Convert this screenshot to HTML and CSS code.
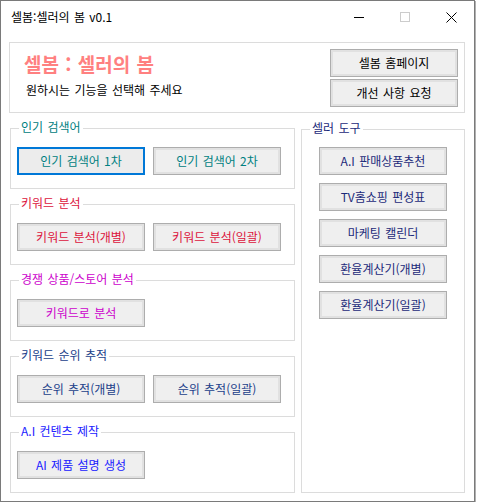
FILE: index.html
```html
<!DOCTYPE html>
<html lang="ko">
<head>
<meta charset="utf-8">
<title>셀봄:셀러의 봄 v0.1</title>
<link rel="stylesheet" href="styles.css">
</head>
<body>
<div class="window">
  <div class="titlebar">
    <span class="app-title">셀봄:셀러의 봄 v0.1</span>
    <div class="controls">
      <span class="ctl"><svg width="10" height="10" viewBox="0 0 10 10"><path d="M0 5.5H10" stroke="#000" stroke-width="1"/></svg></span>
      <span class="ctl"><svg width="10" height="10" viewBox="0 0 10 10"><rect x="0.5" y="0.5" width="9" height="9" fill="none" stroke="#cccccc" stroke-width="1"/></svg></span>
      <span class="ctl"><svg width="11" height="11" viewBox="0 0 11 11"><path d="M0.5 0.5L10.5 10.5M10.5 0.5L0.5 10.5" stroke="#000" stroke-width="1"/></svg></span>
    </div>
  </div>
  <div class="client">
    <div class="header">
      <div class="intro">
        <div class="brand">셀봄 : 셀러의 봄</div>
        <div class="lead">원하시는 기능을 선택해 주세요</div>
      </div>
      <div class="links">
        <button class="btn">셀봄 홈페이지</button>
        <button class="btn">개선 사항 요청</button>
      </div>
    </div>
    <div class="columns">
      <div class="left">
        <section class="group c-teal">
          <span class="legend">인기 검색어</span>
          <div class="row">
            <button class="btn focused">인기 검색어 1차</button>
            <button class="btn">인기 검색어 2차</button>
          </div>
        </section>
        <section class="group c-crimson">
          <span class="legend">키워드 분석</span>
          <div class="row">
            <button class="btn">키워드 분석(개별)</button>
            <button class="btn">키워드 분석(일괄)</button>
          </div>
        </section>
        <section class="group c-magenta">
          <span class="legend">경쟁 상품/스토어 분석</span>
          <div class="row">
            <button class="btn">키워드로 분석</button>
          </div>
        </section>
        <section class="group c-navy">
          <span class="legend">키워드 순위 추적</span>
          <div class="row">
            <button class="btn">순위 추적(개별)</button>
            <button class="btn">순위 추적(일괄)</button>
          </div>
        </section>
        <section class="group c-blue">
          <span class="legend">A.I 컨텐츠 제작</span>
          <div class="row">
            <button class="btn">AI 제품 설명 생성</button>
          </div>
        </section>
      </div>
      <section class="group tools c-midnight">
        <span class="legend">셀러 도구</span>
        <div class="stack">
          <button class="btn">A.I 판매상품추천</button>
          <button class="btn">TV홈쇼핑 편성표</button>
          <button class="btn">마케팅 캘린더</button>
          <button class="btn">환율계산기(개별)</button>
          <button class="btn">환율계산기(일괄)</button>
        </div>
      </section>
    </div>
  </div>
</div>
</body>
</html>
```

FILE: styles.css
```css
* { box-sizing: border-box; }
html, body { margin: 0; padding: 0; background: #ffffff; }
body {
  font-family: "Noto Sans CJK KR", "Noto Sans", sans-serif;
  font-size: 12px;
  color: #000;
}
.window {
  width: 475px;
  height: 502px;
  border: 1px solid #7a7a7a;
  box-shadow: 1px 1px 0 #b0b0b0;
  background: #ffffff;
  display: flex;
  flex-direction: column;
}
.titlebar {
  height: 32px;
  flex: none;
  display: flex;
  align-items: center;
  justify-content: space-between;
  padding-left: 10px;
}
.app-title {
  font-size: 12px;
  line-height: 16px;
  word-spacing: 1px;
}
.controls { display: flex; height: 32px; }
.ctl {
  width: 46px;
  height: 32px;
  display: flex;
  align-items: center;
  justify-content: center;
}
.client { padding: 9px 0 0 8px; }
.header {
  width: 456px;
  height: 71px;
  border: 1px solid #dcdcdc;
  display: flex;
  justify-content: space-between;
  padding: 6px 6px 0 14px;
}
.intro { padding-top: 2px; }
.brand {
  font-size: 19px;
  line-height: 26px;
  font-weight: bold;
  color: #ff8080;
  word-spacing: 1px;
}
.lead {
  margin-top: 5px;
  padding-left: 2px;
  line-height: 16px;
  word-spacing: 1px;
}
.links {
  display: flex;
  flex-direction: column;
  gap: 2px;
}
.btn {
  width: 128px;
  height: 28px;
  border: 1px solid #adadad;
  background: #efefef;
  box-shadow: inset 0 0 0 2px #e1e1e1;
  font-family: inherit;
  font-size: 12px;
  line-height: 16px;
  color: inherit;
  padding: 0;
  word-spacing: 1px;
  display: flex;
  align-items: center;
  justify-content: center;
}
.btn.focused {
  border: 2px solid #0078d7;
  box-shadow: none;
  background: #ececec;
}
.columns {
  display: flex;
  gap: 6px;
  margin-top: 15px;
  padding-left: 1px;
}
.left {
  width: 285px;
  display: flex;
  flex-direction: column;
  gap: 15px;
}
.group {
  position: relative;
  height: 61px;
  border: 1px solid #dcdcdc;
  padding: 18px 0 0 6px;
}
.legend {
  position: absolute;
  top: -10px;
  left: 8px;
  padding: 0 2px;
  background: #ffffff;
  line-height: 16px;
  word-spacing: 1px;
  white-space: nowrap;
}
.row { display: flex; gap: 8px; }
.tools {
  width: 164px;
  height: auto;
  margin-top: 1px;
  padding: 17px 0 0 17px;
}
.stack {
  display: flex;
  flex-direction: column;
  gap: 8px;
}
.c-teal { color: #008080; }
.c-crimson { color: #dc143c; }
.c-magenta { color: #cc00cc; }
.c-navy { color: #21408a; }
.c-blue { color: #2020ff; }
.c-midnight { color: #1c2a7a; }
```
